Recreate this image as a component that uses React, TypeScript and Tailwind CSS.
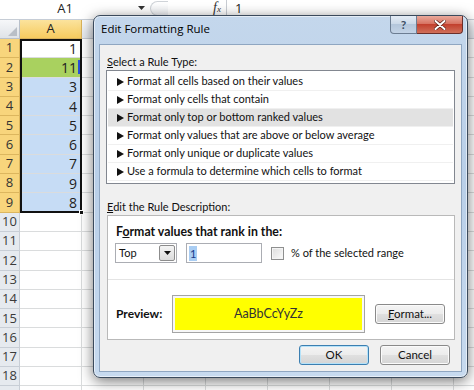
import React from 'react';

const COLS = ['A', 'B', 'C', 'D', 'E', 'F', 'G', 'H'];
const VALUES: (number | null)[] = [1, 11, 3, 4, 5, 6, 7, 9, 8];
const RULES = [
  'Format all cells based on their values',
  'Format only cells that contain',
  'Format only top or bottom ranked values',
  'Format only values that are above or below average',
  'Format only unique or duplicate values',
  'Use a formula to determine which cells to format',
];

function cellBg(row: number) {
  if (row === 1) return 'bg-white';
  if (row === 2) return 'bg-[#a9d15f]';
  if (row <= 9) return 'bg-[#c6dcf5]';
  return 'bg-white';
}

function Pointer() {
  return (
    <svg width="7" height="8" viewBox="0 0 7 8" className="shrink-0">
      <polygon points="0,0 7,4 0,8" fill="#111" />
    </svg>
  );
}

function WinButton({ children, primary = false, className = '' }: { children: React.ReactNode; primary?: boolean; className?: string }) {
  return (
    <div
      className={`flex items-center justify-center rounded-[3px] border text-[11.5px] text-[#111] bg-[linear-gradient(#f4f4f4_0%,#ececec_50%,#e0e0e0_50%,#d5d5d5_100%)] ${
        primary
          ? 'border-[#3c7fb1] shadow-[inset_0_0_0_1px_#b5e2f9]'
          : 'border-[#8a8a8a] shadow-[inset_0_0_0_1px_#fbfbfb]'
      } ${className}`}
    >
      {children}
    </div>
  );
}

export default function App() {
  return (
    <div className="relative h-[390px] w-[474px] overflow-hidden bg-white font-['Open_Sans',sans-serif]">
      {/* formula bar */}
      <div className="h-[20px] border-b border-[#c6cdd6] bg-white">
        <div className="flex h-[16px] items-center">
          <div className="w-[130px] text-center text-[13px] leading-none text-[#222]">A1</div>
          <svg width="7" height="4" viewBox="0 0 7 4" className="ml-[8px]">
            <polygon points="0,0 7,0 3.5,4" fill="#333" />
          </svg>
          <div className="ml-[5px] h-[15px] w-[18px] rounded-l-full border border-r-0 border-[#cfd3d8] bg-[linear-gradient(#ffffff,#eef0f3)]" />
          <div className="ml-[45px] font-['Liberation_Serif',serif] text-[14px] italic leading-none text-[#333]">
            f<span className="text-[9px]">x</span>
          </div>
          <div className="ml-[5px] h-[17px] w-px bg-[#c8ccd2]" />
          <div className="ml-[8px] text-[13px] leading-none text-[#222]">1</div>
        </div>
      </div>

      {/* column headers */}
      <div className="flex h-[19px]">
        <div className="relative w-[20px] shrink-0 border-b border-r border-[#b8c0cb] bg-[linear-gradient(#f6f7f9,#dfe3e8)]">
          <svg width="9" height="9" viewBox="0 0 9 9" className="absolute bottom-[2px] right-[2px]">
            <polygon points="9,0 9,9 0,9" fill="#b9bfc7" />
          </svg>
        </div>
        {COLS.map((c) => (
          <div
            key={c}
            className={`flex w-[62px] shrink-0 items-center justify-center border-b border-r text-[13px] ${
              c === 'A'
                ? 'border-[#d9b25a] bg-[linear-gradient(#fbe39d,#f6cb5f)] text-[#222]'
                : 'border-[#c5cbd4] bg-[linear-gradient(#f8f9fb,#e4e8ee)] text-[#333]'
            }`}
          >
            {c === 'A' ? c : ''}
          </div>
        ))}
      </div>

      {/* rows */}
      {Array.from({ length: 19 }, (_, i) => {
        const r = i + 1;
        const sel = r <= 9;
        return (
          <div key={r} className="flex h-[19.3px]">
            <div
              className={`flex w-[20px] shrink-0 items-center justify-center border-b border-r text-[13px] ${
                sel ? 'border-[#dcb65e] bg-[#f8d57c] text-[#333]' : 'border-[#c8ced6] bg-[#e6eaef] text-[#3a3a3a]'
              }`}
            >
              {r <= 18 ? r : ''}
            </div>
            <div
              className={`flex w-[62px] shrink-0 items-center justify-end border-b border-r border-[#dadcdd] pr-[4px] text-[14px] text-[#222] ${cellBg(r)}`}
            >
              {VALUES[i] ?? ''}
            </div>
            {COLS.slice(1).map((c) => (
              <div key={c} className="w-[62px] shrink-0 border-b border-r border-[#dadcdd]" />
            ))}
          </div>
        );
      })}

      {/* selection outline */}
      <div className="absolute left-[20px] top-[39px] h-[174px] w-[62px] border-2 border-[#111]" />
      <div className="absolute left-[78px] top-[60px] h-[14px] w-[2px] bg-[#2a4fd6]" />
      <div className="absolute left-[79px] top-[210px] h-[5px] w-[5px] border border-white bg-[#111]" />

      {/* dialog window */}
      <div className="absolute left-[93px] top-[15px] flex h-[363px] w-[375px] flex-col rounded-[7px] border border-[#3b4a5c] bg-[linear-gradient(180deg,#c4d7ec,#b9cfe8_45%,#c7daef)] px-[5px] pb-[5px] font-['Lato',sans-serif] shadow-[0_3px_14px_rgba(0,0,0,0.55),inset_0_0_0_1px_rgba(255,255,255,0.55)]">
        <div className="flex h-[28px] shrink-0 items-start">
          <div className="pl-[2px] pt-[5px] font-['Open_Sans',sans-serif] text-[11.5px] leading-[16px] text-black">Edit Formatting Rule</div>
          <div className="-mr-[1px] ml-auto flex">
            <div className="flex h-[18px] w-[27px] items-center justify-center rounded-bl-[4px] border border-t-0 border-[#6c7d92] bg-[linear-gradient(#e4ecf5,#c9d7e7_50%,#b4c6db_50%,#c3d3e6)] text-[12px] font-bold leading-none text-[#3d4e66]">
              ?
            </div>
            <div className="flex h-[18px] w-[46px] items-center justify-center rounded-br-[4px] border border-l-0 border-t-0 border-[#6b2f2a] bg-[linear-gradient(#eaa99b,#d56e5d_50%,#c2402e_50%,#d0705a)]">
              <svg width="12" height="10" viewBox="0 0 12 10">
                <path d="M1.5 1 L10.5 9 M10.5 1 L1.5 9" stroke="#5a2018" strokeWidth="3.4" strokeLinecap="round" />
                <path d="M1.5 1 L10.5 9 M10.5 1 L1.5 9" stroke="#ffffff" strokeWidth="2" strokeLinecap="round" />
              </svg>
            </div>
          </div>
        </div>

        <div className="flex flex-1 flex-col border border-[#8fa6c1] bg-[#f0f0f0] px-[6px] pt-[9px] text-[11px] text-[#111]">
          <div className="pl-[1px] leading-[16px]">
            <span className="underline">S</span>elect a Rule Type:
          </div>

          {/* rule list */}
          <div className="h-[114px] border border-[#828790] bg-white px-[1px] pt-[2px]">
            {RULES.map((rule, i) => (
              <div
                key={rule}
                className={`flex h-[18px] items-center gap-[3px] border-b border-[#f0f0f0] pl-[9px] ${
                  i === 2 ? 'bg-[#e2e2e2]' : ''
                }`}
              >
                <Pointer />
                <span className="whitespace-nowrap">{rule}</span>
              </div>
            ))}
          </div>

          <div className="mt-[15px] pl-[1px] leading-[16px]">
            <span className="underline">E</span>dit the Rule Description:
          </div>

          {/* description box */}
          <div className="ml-[1px] flex h-[125px] flex-col border border-[#b9b9b9] bg-white">
            <div className="pl-[8px] pt-[8px] text-[12.3px] font-bold leading-[16px]">
              F<span className="underline">o</span>rmat values that rank in the:
            </div>
            <div className="mt-[3px] flex h-[20px] items-center pl-[7px]">
              <div className="flex h-[20px] w-[62px] items-center border border-[#abadb3] bg-white pl-[3px]">
                <span>Top</span>
                <div className="ml-auto mr-[1px] flex h-[16px] w-[16px] items-center justify-center rounded-[2px] border border-[#8c8c8c] bg-[linear-gradient(#f4f4f4,#dcdcdc)]">
                  <svg width="7" height="4" viewBox="0 0 7 4">
                    <polygon points="0,0 7,0 3.5,4" fill="#111" />
                  </svg>
                </div>
              </div>
              <div className="ml-[9px] flex h-[20px] w-[76px] items-center border border-[#abadb3] bg-white pl-[2px]">
                <span className="bg-[#a9cdf3] px-[1px] leading-[15px] text-[#163a8a]">1</span>
              </div>
              <div className="ml-[9px] h-[13px] w-[13px] border border-[#8e8f8f] bg-[linear-gradient(135deg,#dcdcdc,#fbfbfb)] shadow-[inset_0_0_0_1px_#f4f4f4]" />
              <span className="ml-[7px] whitespace-nowrap">% of the selected range</span>
            </div>
            <div className="mt-[16px] h-px bg-[#e4e4e4]" />
            <div className="mt-[15px] flex items-center pl-[8px]">
              <div className="w-[56px] text-[12px] font-bold">Preview:</div>
              <div className="h-[38px] w-[193px] border border-[#a4a4a4] bg-[#f7f7f7] p-[2px]">
                <div className="flex h-full items-center justify-center bg-[#ffff00] text-[12.5px] text-[#333]">
                  AaBbCcYyZz
                </div>
              </div>
              <WinButton className="ml-[10px] h-[20px] w-[70px]">
                <span>
                  <span className="underline">F</span>ormat...
                </span>
              </WinButton>
            </div>
          </div>

          <div className="mt-[5px] flex justify-end gap-[11px] pr-[5px]">
            <WinButton primary className="h-[20px] w-[70px]">OK</WinButton>
            <WinButton className="h-[20px] w-[70px]">Cancel</WinButton>
          </div>
        </div>
      </div>
    </div>
  );
}
